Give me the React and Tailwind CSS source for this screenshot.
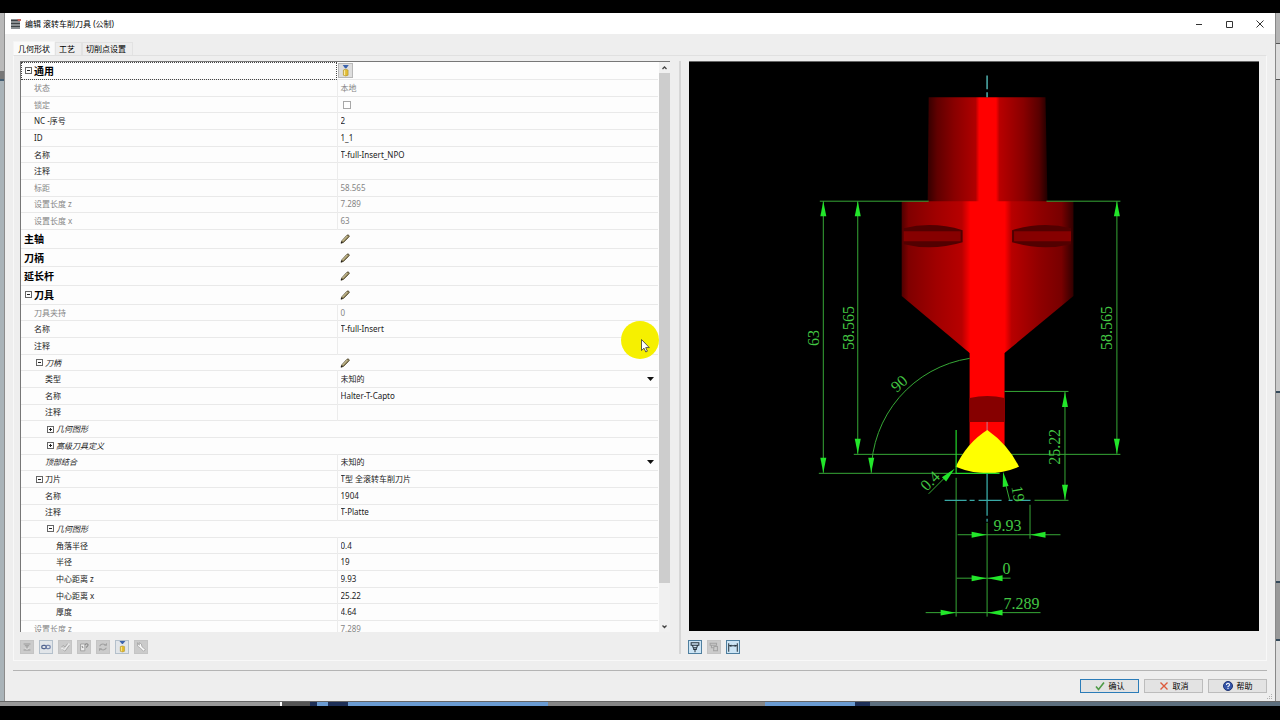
import { useState } from "react";
import clsx from "clsx";

const ROWS = [
  { label: "通用", kind: "head", toggle: "-", value: "filter", focus: true },
  { label: "状态", level: 1, value: "text", text: "本地", muted: true },
  { label: "锁定", level: 1, value: "check", muted: true },
  { label: "NC -序号", level: 1, value: "input", text: "2" },
  { label: "ID", level: 1, value: "input", text: "1_1" },
  { label: "名称", level: 1, value: "input", text: "T-full-Insert_NPO" },
  { label: "注释", level: 1, value: "input", text: "" },
  { label: "标距", level: 1, value: "text", text: "58.565", muted: true },
  { label: "设置长度 z", level: 1, value: "text", text: "7.289", muted: true },
  { label: "设置长度 x", level: 1, value: "text", text: "63", muted: true },
  { label: "主轴", kind: "head", value: "edit" },
  { label: "刀柄", kind: "head", value: "edit" },
  { label: "延长杆", kind: "head", value: "edit" },
  { label: "刀具", kind: "head", toggle: "-", value: "edit" },
  { label: "刀具夹持", level: 1, value: "text", text: "0", muted: true },
  { label: "名称", level: 1, value: "input", text: "T-full-Insert" },
  { label: "注释", level: 1, value: "input", text: "" },
  { label: "刀柄", level: 1, toggle: "-", italic: true, value: "edit" },
  { label: "类型", level: 2, value: "select", text: "未知的" },
  { label: "名称", level: 2, value: "input", text: "Halter-T-Capto" },
  { label: "注释", level: 2, value: "input", text: "" },
  { label: "几何图形", level: 2, toggle: "+", italic: true },
  { label: "高级刀具定义", level: 2, toggle: "+", italic: true },
  { label: "顶部结合", level: 2, italic: true, value: "select", text: "未知的" },
  { label: "刀片", level: 1, toggle: "-", value: "input", text: "T型 全滚转车削刀片" },
  { label: "名称", level: 2, value: "input", text: "1904" },
  { label: "注释", level: 2, value: "input", text: "T-Platte" },
  { label: "几何图形", level: 2, toggle: "-", italic: true },
  { label: "角落半径", level: 3, value: "input", text: "0.4" },
  { label: "半径", level: 3, value: "input", text: "19" },
  { label: "中心距离 z", level: 3, value: "input", text: "9.93" },
  { label: "中心距离 x", level: 3, value: "input", text: "25.22" },
  { label: "厚度", level: 3, value: "input", text: "4.64" },
  { label: "设置长度 z", level: 1, value: "text", text: "7.289", muted: true },
];

const LABEL_PAD = { 1: "pl-[13px]", 2: "pl-[24px]", 3: "pl-[35px]" };
const TOGGLE_PAD = { 0: "pl-1", 1: "pl-[15px]", 2: "pl-[26px]" };

const Pencil = () => (
  <svg viewBox="0 0 10 10" className="block w-[10px] h-[10px]">
    <path d="M1 9.2 1.8 6.8 6.6 1.6Q8 0.2 9 1.4T8.6 3.4L3.6 8.4Z" fill="#8d8158" stroke="#4d4630" strokeWidth="0.7" />
    <path d="M2.6 7 7.4 2" stroke="#e4dbae" strokeWidth="1" />
    <path d="M0.8 9.4 1.6 7.6 2.8 8.6Z" fill="#111" />
  </svg>
);

const FilterIcon = () => (
  <svg viewBox="0 0 14 14" className="block w-[13px] h-[13px]">
    <path d="M4 1H10.500L8 4.500H6.500Z" fill="#3c63ad" />
    <path d="M4.7 6.5Q7 4.8 9.8 6.5V12Q7 13.8 4.7 12Z" fill="#e2bd35" stroke="#a98b2c" strokeWidth="0.6" />
    <path d="M6 6.8V12" stroke="#f9eba6" strokeWidth="1.2" />
  </svg>
);

const Value = ({ row, id }) => {
  if (row.value === "filter") {
    return (
      <button aria-label="筛选" className="block w-[15px] h-[15px] border border-[#b8b8b8] bg-[#dedede] -ml-[2px]">
        <FilterIcon />
      </button>
    );
  }
  if (row.value === "edit") {
    return (
      <button aria-label={`编辑 ${row.label}`} className="block">
        <Pencil />
      </button>
    );
  }
  if (row.value === "check") {
    return (
      <input
        id={id}
        type="checkbox"
        disabled
        className="block appearance-none w-2 h-2 ml-[2px] border border-[#a8a8a8] bg-white"
      />
    );
  }
  if (row.value === "select") {
    return (
      <div className="flex items-center pr-1">
        <select id={id} className="flex-1 h-3 appearance-none outline-none leading-3 bg-transparent">
          <option>{row.text}</option>
        </select>
        <svg viewBox="0 0 7 4" className="w-[7px] h-1">
          <path d="M0 0H7L3.5 4Z" fill="#111" />
        </svg>
      </div>
    );
  }
  if (row.value === "input") {
    return (
      <input id={id} defaultValue={row.text} className="block w-full h-3 leading-3 bg-transparent outline-none" />
    );
  }
  return <span>{row.text}</span>;
};

const PropertyRow = ({ row, index }) => {
  const id = `prop-${index}`;
  const head = row.kind === "head";
  const level = row.level || 0;

  return (
    <tr
      className={clsx(
        "border-b border-[#e9e9e9]",
        row.focus ? "h-[17px]" : head ? "h-[18px]" : "h-4",
        row.muted ? "text-[#858585]" : "text-[#222]"
      )}
    >
      <th
        scope="row"
        className={clsx(
          "p-0 text-left",
          head ? "text-[10px] leading-[14px] font-bold text-black" : "font-normal",
          row.italic && "italic",
          row.focus && "outline-1 outline-dotted outline-[#444] -outline-offset-1"
        )}
      >
        <div
          className={clsx(
            "flex items-center",
            row.toggle ? TOGGLE_PAD[level] : level ? LABEL_PAD[level] : "pl-[3px]"
          )}
        >
          {row.toggle && (
            <button aria-label={`展开 ${row.label}`} className="w-[7px] h-[7px] mr-[2px] border border-[#666]">
              <svg viewBox="0 0 5 5" className="block w-[5px] h-[5px]">
                <path d={row.toggle === "+" ? "M1 2.5H4M2.5 1V4" : "M1 2.5H4"} stroke="#222" />
              </svg>
            </button>
          )}
          <label htmlFor={id}>{row.label}</label>
        </div>
      </th>
      <td className={clsx("p-0 pl-[3px]", row.value && !head && row.value !== "edit" && "border-l border-[#ececec]")}>
        <Value row={row} id={id} />
      </td>
    </tr>
  );
};

const ToolButton = ({ label, state, children }) => (
  <button
    aria-label={label}
    className={clsx(
      "w-[14px] h-[14px] border",
      state === "off" && "border-[#c4c4c4] bg-[#cbcbcb]",
      state === "idle" && "border-[#b4c0cb] bg-[#e1e5e9]",
      state === "on" && "border-[#4f7f9f] bg-[#cde5f5]"
    )}
  >
    <svg viewBox="0 0 14 14" fill="none" className="block w-3 h-3">
      {children}
    </svg>
  </button>
);

const LeftTools = () => (
  <div className="flex gap-[5px] h-[14px]">
    <ToolButton label="夹紧" state="off">
      <path d="M3 3.500H11M4.500 5.500H9.500M7 6V9M3 10.500H11" stroke="#999" strokeWidth="1.300" />
      <path d="M5 8 7 10 9 8" stroke="#eee" />
    </ToolButton>
    <ToolButton label="链接" state="idle">
      <rect x="2" y="5" width="5.500" height="4" rx="2" stroke="#53658f" strokeWidth="1.500" />
      <rect x="6.500" y="5" width="5.500" height="4" rx="2" stroke="#7686ad" strokeWidth="1.500" />
    </ToolButton>
    <ToolButton label="应用" state="off">
      <path d="M3 8 6 11 12 3" stroke="#eaeaea" strokeWidth="2" />
      <path d="M3 7 5 5 7 7 10 3M4 10 7 12 12 5" stroke="#a4a4a4" />
    </ToolButton>
    <ToolButton label="检查" state="off">
      <path d="M3 3.500H8V11.500H3Z" fill="#eee" stroke="#999" />
      <path d="M4.500 6 6 8M8.500 4.500Q9 2.500 11 3.500T10 7V8" stroke="#888" strokeWidth="1.200" />
    </ToolButton>
    <ToolButton label="刷新" state="off">
      <path d="M3 6Q5 2.500 9 4L11 5M11 2.500V5H8.500M11 8Q9 11.500 5 10L3 9M3 11.500V9H5.500" stroke="#a0a0a0" strokeWidth="1.200" />
    </ToolButton>
    <ToolButton label="筛选" state="idle">
      <path d="M4 0H11L8 3.500H7Z" fill="#3c63ad" />
      <path d="M5 6.500Q7.500 5 10 6.500V12Q7.500 13.500 5 12Z" fill="#e3bb27" stroke="#a98b2c" strokeWidth="0.600" />
      <path d="M6.500 7V12" stroke="#f9eba6" />
    </ToolButton>
    <ToolButton label="设置" state="off">
      <path d="M3 2V6L5.500 7.500 10 12 12 10 8 6.500 7.500 3.500 5 2V5Z" fill="#fafafa" stroke="#999" strokeWidth="0.800" />
    </ToolButton>
  </div>
);

const ViewTools = () => (
  <div className="flex gap-[5px] h-[14px] -ml-px">
    <ToolButton label="显示刀具" state="on">
      <path d="M2.500 2H11.500V5H2.500ZM4 5 5 8H9L10 5M5.500 8V10H8.500V8M7 10V13" stroke="#26333d" strokeWidth="1.200" />
    </ToolButton>
    <ToolButton label="显示刀片" state="off">
      <path d="M2.500 2.500H10V5H2.500ZM4 5V8H7M7 6.500H11V11.500H6.500Z" stroke="#a2a2a2" strokeWidth="1.200" />
    </ToolButton>
    <ToolButton label="显示尺寸" state="on">
      <path d="M2 2.500V12.500M12 2.500V12.500M2.500 5.500H11.500" stroke="#26333d" strokeWidth="1.200" />
      <path d="M3 5.500 5 4V7ZM11 5.500 9 4V7Z" fill="#26333d" />
    </ToolButton>
  </div>
);

// arrow tip sits at x/y, the head points along the angle (0 = up)
const Arrow = ({ x, y, angle = 0 }) => (
  <path d="M0 0 3 15H-3Z" fill="#22e62a" transform={`translate(${x} ${y}) rotate(${angle})`} />
);

const Slot = () => (
  <g>
    <path d="M903 228Q932 221 962 230V242Q932 251 903 244Z" fill="#520000" />
    <path d="M903 231H960V241H903Z" fill="#860000" />
  </g>
);

const ToolDrawing = () => (
  <svg
    viewBox="688 62 571 569"
    role="img"
    aria-label="刀具预览"
    className="block w-full h-full"
    fontFamily="'Liberation Serif', serif"
    fontSize="16"
  >
    <defs>
      <linearGradient id="shank">
        <stop offset="0" stopColor="#300" />
        <stop offset="0.080" stopColor="#600000" />
        <stop offset="0.220" stopColor="#880000" />
        <stop offset="0.400" stopColor="#b00000" />
        <stop offset="0.430" stopColor="#f00" />
        <stop offset="0.570" stopColor="#f00" />
        <stop offset="0.600" stopColor="#b80000" />
        <stop offset="0.800" stopColor="#880000" />
        <stop offset="0.930" stopColor="#580000" />
        <stop offset="1" stopColor="#200000" />
      </linearGradient>
      <linearGradient id="body">
        <stop offset="0" stopColor="#500000" />
        <stop offset="0.040" stopColor="#800000" />
        <stop offset="0.200" stopColor="#a00000" />
        <stop offset="0.350" stopColor="#b80000" />
        <stop offset="0.400" stopColor="#f00" />
        <stop offset="0.600" stopColor="#f00" />
        <stop offset="0.640" stopColor="#b80000" />
        <stop offset="0.800" stopColor="#900000" />
        <stop offset="0.930" stopColor="#780000" />
        <stop offset="1" stopColor="#300000" />
      </linearGradient>
    </defs>

    <path d="M928 97H1045L1047 202H927Z" fill="url(#shank)" />
    <path d="M901 201H1073V296L1004 353H969L901 296Z" fill="url(#body)" />
    <path d="M969 352H1004V448H969Z" fill="#f00" />
    <path d="M969 398Q987 394 1004 398V422H969Z" fill="#860000" />
    <Slot />
    <g transform="translate(1973.500 0) scale(-1 1)">
      <Slot />
    </g>

    <g stroke="#36a836" fill="none">
      <path d="M819 201H928M1046 201H1120" />
      <path d="M822.500 201V473M857 201V454M1116.500 201V454" />
      <path d="M818 473.500H956M853 454.500H962M1010 454.500H1120" />
      <path d="M969 358.400A116 116 0 0 0 870.500 473" />
      <path d="M1004 391.500H1068M1034 500.500H1068M1064.500 392V500" />
      <path d="M955.500 478V617M986.500 523V617M1029.500 505V539" />
      <path d="M957 535H1060M956 578.500H1010M925 613H1040" />
      <path d="M928 494 950 472M1004 480 1009 500" />
    </g>

    <path d="M986.500 75V89M986.500 92V97" stroke="#4fb0ae" strokeWidth="1.500" />
    <path d="M986.500 422V432" stroke="#c08090" />
    <path d="M986.700 430Q1008 445 1018.500 467Q987 480 955 467Q966 443 986.700 430Z" fill="#ff0" />
    <path d="M955.500 430V473.500H999" stroke="#22d82a" strokeWidth="1.200" fill="none" />
    <path
      d="M944 500.500H966M969 500.500H974M978 500.500H1001M1008 500.500H1012M1015 500.500H1030M986.500 474V516M986.500 519V522"
      stroke="#39a9a6"
      strokeWidth="1.300"
    />

    <Arrow x={822.5} y={201} />
    <Arrow x={857} y={201} />
    <Arrow x={1116.5} y={201} />
    <Arrow x={1064.5} y={392} />
    <Arrow x={822.5} y={473} angle={180} />
    <Arrow x={857} y={454} angle={180} />
    <Arrow x={1116.5} y={454} angle={180} />
    <Arrow x={870.5} y={473} angle={180} />
    <Arrow x={1064.5} y={500} angle={180} />
    <Arrow x={954} y={469} angle={45} />
    <Arrow x={1002.5} y={472} angle={-10} />
    <Arrow x={986} y={535} angle={90} />
    <Arrow x={1030} y={535} angle={-90} />
    <Arrow x={986} y={578.5} angle={90} />
    <Arrow x={987} y={578.5} angle={-90} />
    <Arrow x={955} y={613} angle={90} />
    <Arrow x={987} y={613} angle={-90} />

    <g fill="#43c643">
      <text transform="translate(818 346) rotate(-90)">63</text>
      <text transform="translate(853 350) rotate(-90)">58.565</text>
      <text transform="translate(1112 350) rotate(-90)">58.565</text>
      <text transform="translate(1060 465) rotate(-90)">25.22</text>
      <text transform="translate(896 393) rotate(-42)">90</text>
      <text transform="translate(926 492) rotate(-45)">0.4</text>
      <text transform="translate(1011 487) rotate(80)">19</text>
      <text x="993" y="531">9.93</text>
      <text x="1002" y="574">0</text>
      <text x="1003" y="609">7.289</text>
    </g>
  </svg>
);

const TitleBar = () => (
  <header className="flex items-center h-[21px] pl-[6px] bg-white">
    <svg viewBox="0 0 10 10" className="w-[10px] h-[10px]">
      <path d="M0 0H9V10H0Z" fill="#8a8f92" />
      <path d="M0 1.500H9M0 4.500H9M0 7.500H9" stroke="#3d4346" strokeWidth="1.200" />
      <path d="M6 0H10V2H7Z" fill="#c4625c" />
    </svg>
    <h1 className="flex-1 pl-1 text-black">编辑 滚转车削刀具 (公制)</h1>
    <button aria-label="最小化" className="flex justify-center w-[30px]">
      <svg viewBox="0 0 8 8" className="w-2 h-2">
        <path d="M1 4.500H7" stroke="#333" />
      </svg>
    </button>
    <button aria-label="最大化" className="flex justify-center w-[30px]">
      <svg viewBox="0 0 8 8" className="w-2 h-2">
        <path d="M1.500 1.500H7.500V7.500H1.500Z" stroke="#333" fill="none" />
      </svg>
    </button>
    <button aria-label="关闭" className="flex justify-center w-[31px]">
      <svg viewBox="0 0 8 8" className="w-2 h-2">
        <path d="M0.500 0.500 7.500 7.500M7.500 0.500 0.500 7.500" stroke="#333" />
      </svg>
    </button>
  </header>
);

const TABS = ["几何形状", "工艺", "切削点设置"];

const Tabs = ({ active, setActive }) => (
  <div role="tablist" className="flex items-end h-[21px] pl-2">
    {TABS.map((tab, i) => (
      <button
        key={tab}
        role="tab"
        aria-selected={active === i}
        onClick={() => setActive(i)}
        className={clsx(
          "border-x border-t text-black",
          active === i
            ? "h-[14px] px-1 border-[#f4f4f4] bg-[#fafafa]"
            : "h-[13px] pl-[3px] pr-[6px] border-[#e2e2e2] bg-[#ededed]"
        )}
      >
        {tab}
      </button>
    ))}
  </div>
);

const ScrollBar = () => (
  <div className="flex flex-col w-[11px] bg-[#f0f0f0]">
    <svg viewBox="0 0 11 11" fill="none" className="w-[11px] h-[11px]">
      <path d="M3.500 7 5.500 5 7.500 7" stroke="#444" strokeWidth="1.300" />
    </svg>
    <div className="flex-1">
      <div className="h-[93%] bg-[#cdcdcd]" />
    </div>
    <svg viewBox="0 0 11 11" fill="none" className="w-[11px] h-[11px]">
      <path d="M3.500 4.500 5.500 6.500 7.500 4.500" stroke="#444" strokeWidth="1.300" />
    </svg>
  </div>
);

const FooterButton = ({ label, primary, children }) => (
  <button
    className={clsx(
      "flex items-center justify-center gap-1 w-[59px] h-[14px] text-black bg-[#e3e3e3]",
      primary ? "border border-[#2b7cb8]" : "border border-[#bcbcbc]"
    )}
  >
    <svg viewBox="0 0 10 10" fill="none" className="w-[10px] h-[10px]">
      {children}
    </svg>
    {label}
  </button>
);

const Footer = () => (
  <footer className="flex justify-end gap-[5px] mx-2 pt-2 h-[31px] border-t border-[#b4b4b4]">
    <FooterButton label="确认" primary>
      <path d="M1 5.500 3.500 8.500 9 1.500" stroke="#4e9a45" strokeWidth="1.600" />
    </FooterButton>
    <FooterButton label="取消">
      <path d="M1.500 1.500 8.500 8.500M8.500 1.500 1.500 8.500" stroke="#dd5a3c" strokeWidth="1.400" />
    </FooterButton>
    <FooterButton label="帮助">
      <circle cx="5" cy="5" r="4.500" fill="#3556ab" stroke="#1f3472" />
      <path d="M3.500 4Q3.500 2.300 5 2.300T6.500 4Q6.400 4.700 5 5.500V6.200M5 7V8" stroke="#fff" strokeWidth="1.100" />
    </FooterButton>
  </footer>
);

const ResizeGrip = () => (
  <svg viewBox="0 0 6 6" className="absolute right-[2px] bottom-px w-[6px] h-[6px]">
    <path d="M4 0H5V1H4ZM2 2H3V3H2ZM4 2H5V3H4ZM0 4H1V5H0ZM2 4H3V5H2ZM4 4H5V5H4Z" fill="#b0b0b0" />
  </svg>
);

const Pointer = () => (
  <div className="absolute left-[601px] top-[260px] w-[38px] h-[38px] rounded-full bg-[#f6f000] pointer-events-none">
    <svg viewBox="0 0 9 14" className="absolute left-5 top-[18px] w-[9px] h-[14px]">
      <path d="M0.500 0.500V11.500L3 9.200 4.800 13 6.400 12.200 4.700 8.600H8.300Z" fill="#fff" stroke="#333" strokeWidth="0.800" />
    </svg>
  </div>
);

export default function App() {
  const [active, setActive] = useState(0);

  return (
    <div className="flex flex-col h-screen overflow-hidden bg-black pt-[13px] pb-[14px] text-[8px] leading-3 font-['Noto_Sans','Noto_Sans_CJK_SC',sans-serif]">
      <div className="flex flex-1 min-h-0">
        <div className="flex flex-col w-[5px] border-r border-[#8b8b8b] bg-[#a9b3b8]">
          <div className="h-[58px] bg-[#b9b9b9]" />
          <div className="h-[10px] border-b-2 border-[#455f73] bg-[#777]" />
        </div>

        <main className="relative flex flex-col flex-1 min-w-0 bg-[#eee]">
          <TitleBar />
          <Tabs active={active} setActive={setActive} />

          <section className="flex flex-1 min-h-0 mx-2 pt-[5px] pb-[6px] pl-[6px] pr-[7px] border border-[#f8f8f8] border-t-[#e0e0e0]">
            <div className="relative flex flex-col w-8/15 pr-[9px] border-r-2 border-[#d6d6d6]">
              <div className="flex flex-1 min-h-0 mb-2 border-t border-l border-[#777] bg-[#fdfdfd]">
                <div className="flex-1 overflow-hidden pr-px">
                  <table className="w-full h-[576px] table-fixed">
                    <colgroup>
                      <col className="w-[316px]" />
                      <col />
                    </colgroup>
                    <tbody>
                      {ROWS.map((row, i) => (
                        <PropertyRow key={i} row={row} index={i} />
                      ))}
                    </tbody>
                  </table>
                </div>
                <ScrollBar />
              </div>
              <LeftTools />
              <Pointer />
            </div>

            <div className="flex flex-col flex-1 min-w-0 pl-2">
              <div className="flex-1 min-h-0 mb-[9px] border-t border-[#666] bg-black">
                <ToolDrawing />
              </div>
              <ViewTools />
            </div>
          </section>

          <div className="h-[9px]" />
          <Footer />
          <ResizeGrip />
        </main>

        <div className="flex flex-col w-[5px] border-l border-[#888] bg-[#c9c9c9]">
          <div className="h-[30px] bg-[#b5b5b5]" />
          <div className="h-[37px] border-y border-[#555] bg-[#ddd]" />
          <div className="flex-1" />
          <div className="h-[190px] border-t-2 border-[#34495a] bg-[#b5b5b5]" />
          <div className="h-[60px] border-y-2 border-[#34495a] bg-[#999]" />
          <div className="h-[60px] bg-[#ddd]" />
        </div>
      </div>

      <div className="flex h-[5px] border-t border-[#666] bg-[#8b9399]">
        <div className="w-[22%] border-r-2 border-white bg-[#999]" />
        <div className="w-[28px] bg-[#555]" />
        <div className="w-[7px] bg-[#1d2f57]" />
        <div className="w-[11px] bg-[#6a9bd2]" />
        <div className="w-5 bg-[#1d2f57]" />
        <div className="flex-1 bg-[#6a9bd2]" />
        <div className="w-[17%] bg-[#868686]" />
        <div className="w-[90px] bg-[#6a9bd2]" />
        <div className="w-[15px] bg-[#1d2f57]" />
        <div className="w-[32%] bg-[#5d6f7e]" />
      </div>
    </div>
  );
}
